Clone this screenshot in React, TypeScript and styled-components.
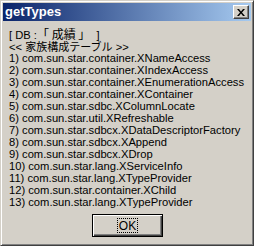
import React from "react";
import styled, { createGlobalStyle } from "styled-components";

const Global = createGlobalStyle`
  html, body { margin: 0; padding: 0; background: #d4d0c8; }
  body { width: 254px; height: 246px; overflow: hidden; }
`;

const Window = styled.div`
  box-sizing: border-box;
  width: 254px;
  height: 246px;
  background: #d4d0c8;
  border: 1px solid;
  border-color: #d4d0c8 #404040 #404040 #d4d0c8;
  box-shadow: inset 1px 1px #ffffff, inset -1px -1px #808080;
  padding: 2px;
  display: flex;
  flex-direction: column;
`;

const TitleBar = styled.div`
  height: 18px;
  display: flex;
  align-items: center;
  justify-content: space-between;
  padding: 0 2px 0 2px;
  background: linear-gradient(to right, #0a246a, #a6caf0);
`;

const Title = styled.span`
  color: #ffffff;
  font-family: "Liberation Sans", Arial, sans-serif;
  font-weight: bold;
  font-size: 13px;
  line-height: 18px;
`;

const CloseButton = styled.button`
  box-sizing: border-box;
  width: 16px;
  height: 14px;
  padding: 0;
  margin: 0;
  border: 1px solid;
  border-color: #ffffff #404040 #404040 #ffffff;
  box-shadow: inset -1px -1px #808080;
  background: #d4d0c8;
  display: flex;
  align-items: center;
  justify-content: center;
`;

const Content = styled.div`
  padding: 7px 0 0 6px;
  display: flex;
  flex-direction: column;
`;

const Line = styled.div`
  font-family: "Liberation Sans", "Noto Sans CJK JP", sans-serif;
  font-size: 11.2px;
  line-height: 12px;
  height: 12px;
  color: #000000;
  white-space: pre;
`;

const Cjk = styled.span<{ $size: number }>`
  font-family: "Noto Sans CJK JP", sans-serif;
  font-size: ${(p) => p.$size}px;
  line-height: 12px;
`;

const Footer = styled.div`
  display: flex;
  justify-content: center;
  margin-top: 6px;
  padding-left: 1px;
`;

const OkButton = styled.button`
  box-sizing: border-box;
  width: 71px;
  height: 23px;
  padding: 0;
  border: 1px solid #000000;
  box-shadow: inset 1px 1px #ffffff, inset -1px -1px #404040, inset -2px -2px #808080;
  background: #d4d0c8;
  display: flex;
  align-items: center;
  justify-content: center;
`;

const Focus = styled.span`
  box-sizing: border-box;
  width: 21px;
  height: 15px;
  border: 1px dotted #000000;
  display: flex;
  align-items: center;
  justify-content: center;
  font-family: "Liberation Sans", Arial, sans-serif;
  font-size: 12px;
  line-height: 12px;
  color: #000000;
`;

const lines = [
  "1) com.sun.star.container.XNameAccess",
  "2) com.sun.star.container.XIndexAccess",
  "3) com.sun.star.container.XEnumerationAccess",
  "4) com.sun.star.container.XContainer",
  "5) com.sun.star.sdbc.XColumnLocate",
  "6) com.sun.star.util.XRefreshable",
  "7) com.sun.star.sdbcx.XDataDescriptorFactory",
  "8) com.sun.star.sdbcx.XAppend",
  "9) com.sun.star.sdbcx.XDrop",
  "10) com.sun.star.lang.XServiceInfo",
  "11) com.sun.star.lang.XTypeProvider",
  "12) com.sun.star.container.XChild",
  "13) com.sun.star.lang.XTypeProvider",
];

export default function App() {
  return (
    <>
      <Global />
      <Window>
        <TitleBar>
          <Title>getTypes</Title>
          <CloseButton aria-label="close">
            <svg width="8" height="7" viewBox="0 0 8 7">
              <path d="M0 0h2l2 2.5L6 0h2L5 3.5 8 7H6L4 4.5 2 7H0l3-3.5z" fill="#000" />
            </svg>
          </CloseButton>
        </TitleBar>
        <Content>
          <Line>
            {"[ DB :"}
            <Cjk $size={12}>{"「 成績 」"}</Cjk>
            {"  ]"}
          </Line>
          <Line>
            {"<< "}
            <Cjk $size={11}>家族構成テーブル</Cjk>
            {" >>"}
          </Line>
          {lines.map((t, i) => (
            <Line key={i}>{t}</Line>
          ))}
        </Content>
        <Footer>
          <OkButton>
            <Focus>OK</Focus>
          </OkButton>
        </Footer>
      </Window>
    </>
  );
}
